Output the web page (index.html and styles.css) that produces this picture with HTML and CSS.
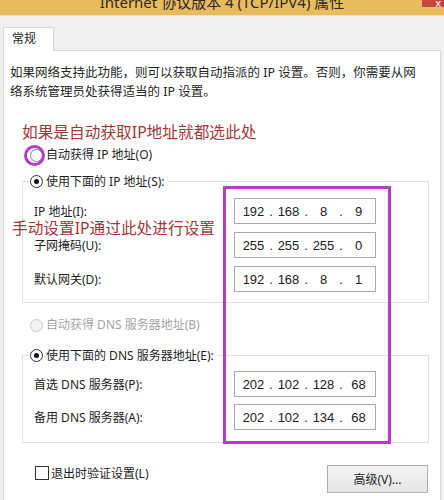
FILE: index.html
```html
<!DOCTYPE html>
<html lang="zh-CN">
<head>
<meta charset="utf-8">
<title>Internet 协议版本 4 (TCP/IPV4) 属性</title>
<link rel="stylesheet" href="styles.css">
</head>
<body>
<div class="titlebar">
  <span></span>
  <div class="title">Internet 协议版本 4 (TCP/IPV4) 属性</div>
  <div class="close">x</div>
</div>
<div class="tabs"><div class="tab">常规</div></div>
<div class="panel">
  <p class="desc">如果网络支持此功能，则可以获取自动指派的 IP 设置。否则，你需要从网<br>络系统管理员处获得适当的 IP 设置。</p>
  <div class="note note-auto">如果是自动获取IP地址就都选此处</div>
  <div class="opt opt-auto"><span class="radio"></span>自动获得 IP 地址(O)</div>
  <div class="group">
    <div class="legend"><span class="radio on"></span>使用下面的 IP 地址(S):</div>
    <div class="fields">
      <span class="lbl">IP 地址(I):</span>
      <div class="ip"><span>192</span><i>.</i><span>168</span><i>.</i><span>8</span><i>.</i><span>9</span></div>
      <span class="lbl">子网掩码(U):</span>
      <div class="ip"><span>255</span><i>.</i><span>255</span><i>.</i><span>255</span><i>.</i><span>0</span></div>
      <span class="lbl">默认网关(D):</span>
      <div class="ip"><span>192</span><i>.</i><span>168</span><i>.</i><span>8</span><i>.</i><span>1</span></div>
    </div>
  </div>
  <div class="opt dns-auto disabled"><span class="radio off"></span>自动获得 DNS 服务器地址(B)</div>
  <div class="group group-dns">
    <div class="legend"><span class="radio on"></span>使用下面的 DNS 服务器地址(E):</div>
    <div class="fields">
      <span class="lbl">首选 DNS 服务器(P):</span>
      <div class="ip"><span>202</span><i>.</i><span>102</span><i>.</i><span>128</span><i>.</i><span>68</span></div>
      <span class="lbl">备用 DNS 服务器(A):</span>
      <div class="ip"><span>202</span><i>.</i><span>102</span><i>.</i><span>134</span><i>.</i><span>68</span></div>
    </div>
  </div>
  <div class="footer">
    <div class="check"><span class="box"></span>退出时验证设置(L)</div>
    <div class="btn">高级(V)...</div>
  </div>
</div>
<div class="note note-manual">手动设置IP通过此处进行设置</div>
<div class="ring"></div>
<div class="frame"></div>
</body>
</html>
```
FILE: styles.css
```css
* { box-sizing: border-box; }
html, body { margin: 0; }
body {
  width: 444px;
  height: 500px;
  overflow: hidden;
  position: relative;
  background: #f0f0f0;
  font-family: "Noto Sans", "Noto Sans CJK SC", sans-serif;
  font-size: 12px;
  color: #1e1e1e;
}

.titlebar {
  height: 16px;
  background: #e8bb5f;
  border-bottom: 1px solid #f4e1b3;
  display: grid;
  grid-template-columns: 1fr auto 1fr;
  overflow: hidden;
}
.title {
  font-size: 15px;
  line-height: 15px;
  margin-top: -5px;
  color: #2d2a26;
  white-space: nowrap;
}
.close {
  justify-self: end;
  width: 22px;
  height: 7px;
  background: #c8473c;
  color: #fff;
  font-size: 11px;
  line-height: 5px;
  text-align: right;
  padding-right: 3px;
  overflow: hidden;
}

.tabs { display: flex; padding: 11px 0 0 3px; }
.tab {
  position: relative;
  margin-bottom: -1px;
  width: 51px;
  height: 24px;
  background: #fff;
  border: 1px solid #d9d9d9;
  border-bottom: 0;
  padding: 2px 0 0 8px;
  line-height: 17px;
}

.panel {
  margin-left: 3px;
  width: 438px;
  height: 460px;
  background: #fff;
  border: 1px solid #d9d9d9;
}

.desc {
  margin: 12px 0 0 6px;
  font-size: 12.5px;
  line-height: 19px;
  white-space: nowrap;
  color: #262626;
}

.note {
  font-size: 15.7px;
  line-height: 20px;
  color: #a2383b;
  white-space: nowrap;
}
.note-auto { margin: 21px 0 0 18px; }
.note-manual { position: absolute; left: 12px; top: 218px; }

.opt {
  display: flex;
  align-items: center;
  gap: 3px;
  height: 16px;
  line-height: 16px;
  white-space: nowrap;
}
.opt-auto { margin: 5px 0 0 26px; }
.dns-auto { margin: 14px 0 0 26px; }
.disabled { color: #a4a4a4; }

.radio {
  flex: none;
  width: 13px;
  height: 13px;
  border-radius: 50%;
  border: 1px solid #8a8a8a;
  background: #fff;
  display: flex;
  align-items: center;
  justify-content: center;
}
.radio.on { border-color: #333; }
.radio.on::after {
  content: "";
  width: 5px;
  height: 5px;
  border-radius: 50%;
  background: #111;
}
.radio.off { border-color: #c8c8c8; background: #f3f3f3; }

.group {
  margin: 18px 0 0 18px;
  width: 407px;
  border: 1px solid #e0e0e0;
  padding: 0 0 10px 11px;
}
.group-dns { margin-top: 22px; padding-bottom: 12px; }
.legend {
  display: flex;
  align-items: center;
  gap: 3px;
  width: max-content;
  height: 16px;
  margin: -9px 0 0 -4px;
  padding-right: 3px;
  background: #fff;
  white-space: nowrap;
}
.fields {
  display: grid;
  grid-template-columns: 200px 142px;
  row-gap: 8px;
  margin-top: 9px;
  align-items: center;
}
.group-dns .fields { row-gap: 7px; margin-top: 8px; }
.lbl { white-space: nowrap; }

.ip {
  height: 26px;
  border: 1px solid #ababab;
  background: #fff;
  display: flex;
  align-items: center;
  padding-left: 4px;
  font-family: "Liberation Sans", sans-serif;
  font-size: 13px;
  color: #222;
}
.ip span { width: 29px; text-align: center; }
.ip i { font-style: normal; width: 6px; text-align: center; }

.footer {
  display: flex;
  justify-content: space-between;
  align-items: flex-start;
  margin-top: 22px;
  padding: 0 12px 0 31px;
}
.check {
  display: flex;
  align-items: center;
  gap: 2px;
  height: 14px;
  margin-top: 1px;
  white-space: nowrap;
}
.box {
  width: 14px;
  height: 14px;
  border: 1px solid #333;
  background: #fff;
}
.btn {
  width: 101px;
  height: 28px;
  border: 1px solid #adadad;
  background: linear-gradient(#f3f3f3, #e5e5e5);
  display: flex;
  align-items: center;
  justify-content: center;
}

.ring {
  position: absolute;
  left: 24px;
  top: 145px;
  width: 21px;
  height: 21px;
  border: 3px solid #b23ec2;
  border-radius: 50%;
}
.frame {
  position: absolute;
  left: 223px;
  top: 186px;
  width: 168px;
  height: 258px;
  border: 3px solid #b23ec2;
}
```
